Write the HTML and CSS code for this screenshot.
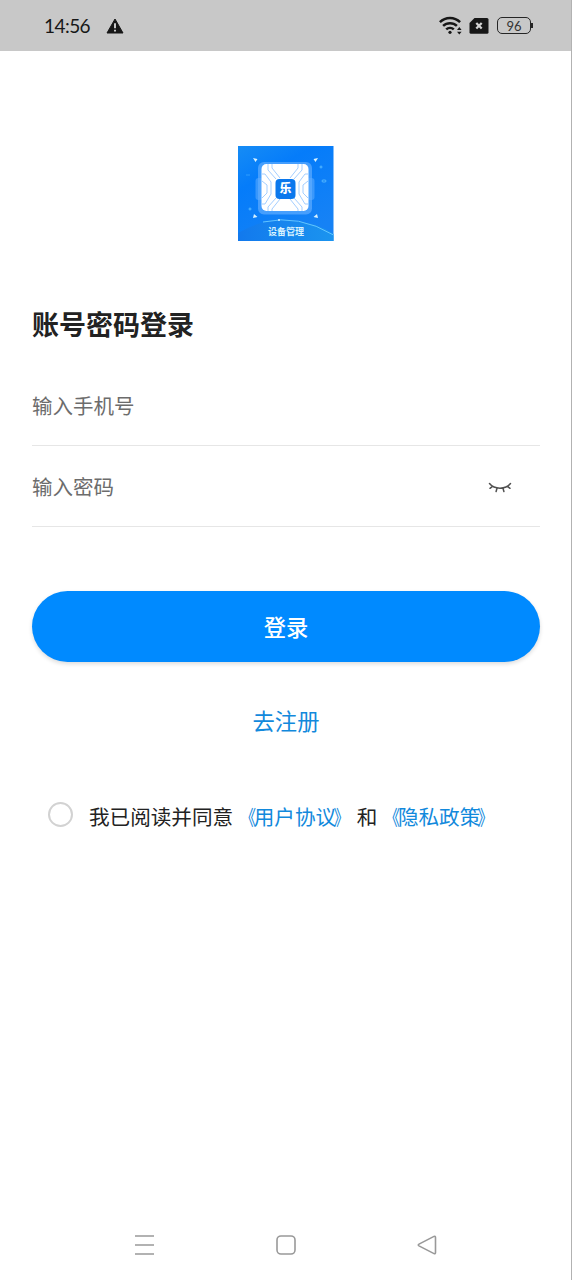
FILE: index.html
```html
<!DOCTYPE html>
<html lang="zh-CN">
<head>
<meta charset="utf-8">
<title>账号密码登录</title>
<link rel="stylesheet" href="styles.css">
</head>
<body>
<div class="screen">
  <header class="status">
    <span class="time">14:56</span>
    <svg class="warn" width="18" height="16" viewBox="0 0 18 16"><path d="M9 1 17 15H1Z" fill="#171717" stroke="#171717" stroke-width="1" stroke-linejoin="round"/><path d="M9 5.2v5M9 11.8v1.8" stroke="#c8c8c8" stroke-width="2"/></svg>
    <div class="indicators">
      <svg width="24" height="20" viewBox="0 0 24 20" fill="none" stroke="#171717" stroke-width="2.5"><path d="M.9 6.2C6.500.6 15.500.6 21.100 6.200M4.100 9.900c3.800-3.700 10-3.700 13.800 0M7.200 13.400c2.100-2 5.500-2 7.600 0"/><circle cx="11" cy="16.300" r="1.600" fill="#171717" stroke="none"/><path d="m18 14 2.300-2.900 2.300 2.900ZM18 15.700l2.300 2.900 2.300-2.900Z" fill="#171717" stroke="none"/></svg>
      <svg class="sim" width="20" height="16" viewBox="0 0 20 16"><path d="M5.500 0H18q1.500 0 1.500 1.500v12.700q0 1.500-1.500 1.500H2q-1.500 0-1.500-1.500V5Z" fill="#171717"/><path d="m7.300 5 5.400 5.600m0-5.600-5.400 5.600" stroke="#d4d4d4" stroke-width="2.200"/></svg>
      <span class="battery">96</span>
    </div>
  </header>

  <main class="login">
    <svg class="logo" width="96" height="95" viewBox="0 0 96 95">
      <defs>
        <linearGradient id="sky" x1="0" y1="0" x2=".6" y2="1"><stop offset="0" stop-color="#168cf5"/><stop offset=".35" stop-color="#057cfa"/><stop offset="1" stop-color="#1682f5"/></linearGradient>
        <linearGradient id="hill" x1="0" y1="0" x2="1" y2="0"><stop offset="0" stop-color="#1279ed"/><stop offset="1" stop-color="#1b94ef"/></linearGradient>
      </defs>
      <rect width="95.500" height="95" fill="url(#sky)"/>
      <path d="M0 95V87Q23 73 51 74.500 78 76 95.500 88v7Z" fill="url(#hill)"/>
      <path d="M25 76Q61 68 95.500 89" fill="none" stroke="#62c5ff" stroke-width="1"/>
      <rect x="20" y="16" width="54" height="52.500" rx="6" fill="#60adff" opacity=".7"/>
      <rect x="17.500" y="32" width="59" height="22" rx="3" fill="#60adff" opacity=".55"/>
      <rect x="23.500" y="18" width="47" height="47" rx="5" fill="#fff"/>
      <g fill="none" stroke="#a3ceff" stroke-width="1"><path d="M30 18v6l8 9M34 18v4l8 10M64 18v6l-8 9M60 18v4l-8 10M24 28h3l6 8v12l-6 10h-3M24 35l5 4v8l-5 5M70 28h-3l-6 8v12l6 10h3M70 35l-5 4v8l5 5M30 65v-4l8-9M34 65v-2l8-10M64 65v-4l-8-9M60 65v-2l-8-10"/></g>
      <rect x="37.500" y="33" width="20" height="20" rx="4" fill="#0b78ed"/>
      <text x="47.500" y="47" class="mark">乐</text>
      <g fill="#d9f3ff"><path d="m15 12 4.500 1-2 3ZM80 12l-4.500 1 2 3ZM15 72l1-4 3.500 3ZM80 72l-1-4-3.500 3Z"/><circle cx="41" cy="74" r="1"/></g>
      <g fill="none" stroke="#63c3ff" stroke-width=".8"><circle cx="83" cy="21" r="1"/><rect x="84" y="34" width="4" height="2" rx="1"/><circle cx="12" cy="63" r="1"/></g>
      <path d="M8 29h4" stroke="#3aa5ff" stroke-width=".8"/>
      <text x="48" y="88.500" class="caption">设备管理</text>
    </svg>

    <h1 class="title">账号密码登录</h1>
    <div class="field">输入手机号</div>
    <div class="field">
      <span>输入密码</span>
      <svg class="eye" width="24" height="14" viewBox="0 0 24 14" fill="none" stroke="#505050" stroke-width="1.500" stroke-linecap="round"><path d="M1.500 2.500C6.500 8.700 17.500 8.700 22.500 2.500M4.500 5.300 2 7.300M9 7.300l-.9 3.200M15 7.300l.9 3.200M19.500 5.300l2.500 2"/></svg>
    </div>
    <button class="submit">登录</button>
    <a class="register">去注册</a>
    <div class="consent"><span class="radio"></span><p>我已阅读并同意<a><span class="open">《</span>用户协议<span class="close">》</span></a>和<a><span class="open">《</span>隐私政策<span class="close">》</span></a></p></div>
  </main>

  <nav class="nav">
    <svg width="22" height="22" viewBox="0 0 22 22"><path d="M2 2h19M2 11h19M2 20h19"/></svg>
    <svg width="22" height="22" viewBox="0 0 22 22"><rect x="2" y="2" width="18" height="18" rx="4"/></svg>
    <svg width="22" height="22" viewBox="0 0 22 22"><path d="M18 2.400 3 10.100q-1.500.9 0 1.800l15 7.700q1.500.6 1.500-1V3.400q0-1.600-1.500-1Z"/></svg>
  </nav>
</div>
</body>
</html>
```
FILE: styles.css
```css
* { box-sizing: border-box; }
body {
  margin: 0;
  font-family: "Noto Sans CJK SC", sans-serif;
  color: #222;
  background: #fff;
}
.screen {
  display: flex;
  flex-direction: column;
  width: 572px;
  height: 1280px;
  overflow: hidden;
  border-right: 1px solid #b2b2b2;
}
.status {
  display: flex;
  align-items: center;
  flex: none;
  height: 51px;
  padding: 0 38px 0 44px;
  background: #c8c8c8;
  color: #171717;
}
.time { width: 62px; font: 19px/24px Lato, sans-serif; letter-spacing: -.55px; }
.indicators { display: flex; align-items: center; margin-left: auto; }
.sim { margin-left: 6px; }
.battery {
  position: relative;
  width: 34px;
  height: 17px;
  margin: 0 2px 0 8px;
  border: 1.500px solid #252525;
  border-radius: 5px;
  font: 13px/16px Lato, sans-serif;
  text-align: center;
  color: #333;
}
.battery::after {
  content: "";
  position: absolute;
  right: -3px;
  top: 5px;
  width: 2px;
  height: 5px;
  background: #252525;
}
.login {
  display: flex;
  flex-direction: column;
  flex: 1;
  padding: 95px 31px 0 32px;
}
.logo { align-self: center; }
.mark { font-size: 12px; font-weight: 900; fill: #fff; text-anchor: middle; }
.caption { font-size: 9px; font-weight: 700; fill: #d9f3ff; text-anchor: middle; }
.title { margin: 63px 0 0; font-size: 27px; line-height: 40px; font-weight: 700; }
.field {
  display: flex;
  align-items: center;
  justify-content: space-between;
  height: 81px;
  border-bottom: 1px solid #e6e6e6;
  font-size: 20.500px;
  color: #6c6c6c;
}
.title + .field { margin-top: 21px; }
.eye { margin: 4px 28px 0 0; }
.submit {
  height: 71px;
  margin-top: 64px;
  padding: 0 0 2px;
  border: 0;
  border-radius: 36px;
  background: #008aff;
  box-shadow: 0 2px 4px rgba(0, 0, 0, .14);
  color: #fff;
  font: 500 22.300px/32px "Noto Sans CJK SC", sans-serif;
}
.register { margin-top: 42px; font-size: 22.300px; line-height: 32px; text-align: center; color: #1289dc; }
.consent { display: flex; align-items: center; margin: 64px 0 0 16px; white-space: nowrap; }
.consent p { margin: 0 0 0 16px; font-size: 20.600px; line-height: 32px; }
.consent a { color: #1289dc; }
.open, .close { display: inline-block; width: 1em; }
.open { transform: translateX(2.500px) scaleX(.78); transform-origin: right; }
.close { transform: translateX(-2.500px) scaleX(.78); transform-origin: left; }
.radio { width: 25px; height: 25px; margin-bottom: 4px; border: 2px solid #d2d2d2; border-radius: 50%; }
.nav {
  display: flex;
  justify-content: space-between;
  flex: none;
  height: 46px;
  padding: 0 133px;
}
.nav svg { fill: none; stroke: #999; stroke-width: 1.600; }
```
